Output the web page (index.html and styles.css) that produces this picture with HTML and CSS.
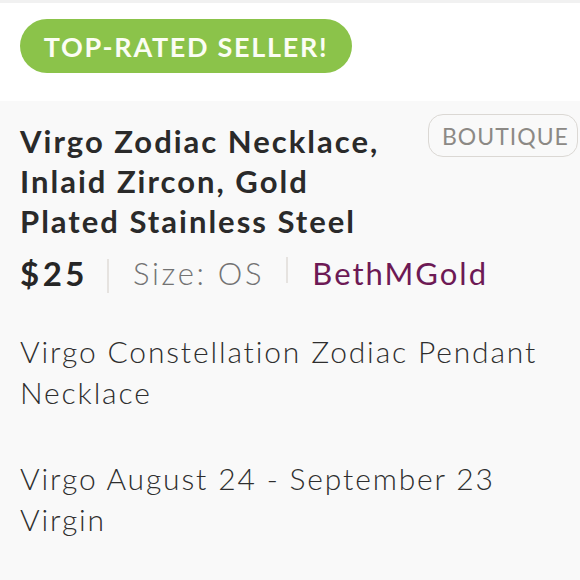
FILE: index.html
```html
<!DOCTYPE html>
<html>
<head>
<meta charset="utf-8">
<link rel="stylesheet" href="styles.css">
</head>
<body>
<div class="page">
  <div class="topbar"></div>
  <div class="header">
    <span class="badge">TOP-RATED SELLER!</span>
  </div>
  <div class="content">
    <div class="title-row">
      <h1 class="title">Virgo Zodiac Necklace, Inlaid Zircon, Gold Plated Stainless Steel</h1>
      <span class="boutique">BOUTIQUE</span>
    </div>
    <div class="meta">
      <span class="price">$25</span>
      <span class="divider divider-a"></span>
      <span class="size">Size: OS</span>
      <span class="divider divider-b"></span>
      <span class="seller">BethMGold</span>
    </div>
    <div class="desc">
      <p>Virgo Constellation Zodiac Pendant Necklace</p>
      <p>Virgo August 24 - September 23<br>Virgin</p>
    </div>
  </div>
</div>
</body>
</html>
```
FILE: styles.css
```css
html, body {
  margin: 0;
  padding: 0;
  background: #f9f9f9;
}
body {
  font-family: "Lato", "Open Sans", sans-serif;
  color: #262626;
  width: 580px;
  height: 580px;
  overflow: hidden;
}
.page {
  width: 580px;
}
.topbar {
  height: 3px;
  background: #f1f1f1;
}
.header {
  background: #ffffff;
  height: 98px;
  padding: 16px 0 0 20px;
  box-sizing: border-box;
}
.badge {
  display: inline-flex;
  align-items: center;
  justify-content: center;
  height: 54px;
  width: 332px;
  box-sizing: border-box;
  border-radius: 27px;
  background: #8bc34a;
  color: #fbfdf4;
  font-size: 27px;
  font-weight: 700;
  letter-spacing: 1.7px;
}
.content {
  padding: 20px 2px 0 20px;
}
.title-row {
  display: flex;
  justify-content: space-between;
  align-items: flex-start;
}
.title {
  margin: 0;
  width: 395px;
  font-size: 31px;
  font-weight: 700;
  line-height: 40px;
  letter-spacing: 2px;
  color: #2a2a2a;
}
.boutique {
  margin-top: -7px;
  height: 43px;
  box-sizing: border-box;
  padding: 0 0 0 13px;
  width: 150px;
  display: inline-flex;
  align-items: center;
  border: 1.5px solid #dbd8d4;
  border-radius: 15px;
  color: #8c8985;
  font-size: 23px;
  letter-spacing: 1px;
}
.meta {
  display: flex;
  align-items: center;
  height: 40px;
  margin-top: 12px;
  font-size: 31px;
}
.price {
  font-weight: 700;
  font-size: 33px;
  letter-spacing: 3.5px;
  color: #262626;
}
.divider {
  width: 2px;
  background: #e6e3e0;
}
.divider-a {
  height: 34px;
  margin: 6px 24px 0 19px;
}
.divider-b {
  height: 26px;
  margin: -6px 24px 0 22px;
}
.size {
  color: #737373;
  font-weight: 300;
  letter-spacing: 2.7px;
}
.seller {
  color: #6d1a55;
  font-weight: 400;
  letter-spacing: 2px;
}
.desc {
  margin-top: 38px;
  font-size: 30px;
  font-weight: 300;
  line-height: 41px;
  letter-spacing: 1.85px;
  color: #2e2e2e;
}
.desc p {
  margin: 0 0 45px 0;
}
```
